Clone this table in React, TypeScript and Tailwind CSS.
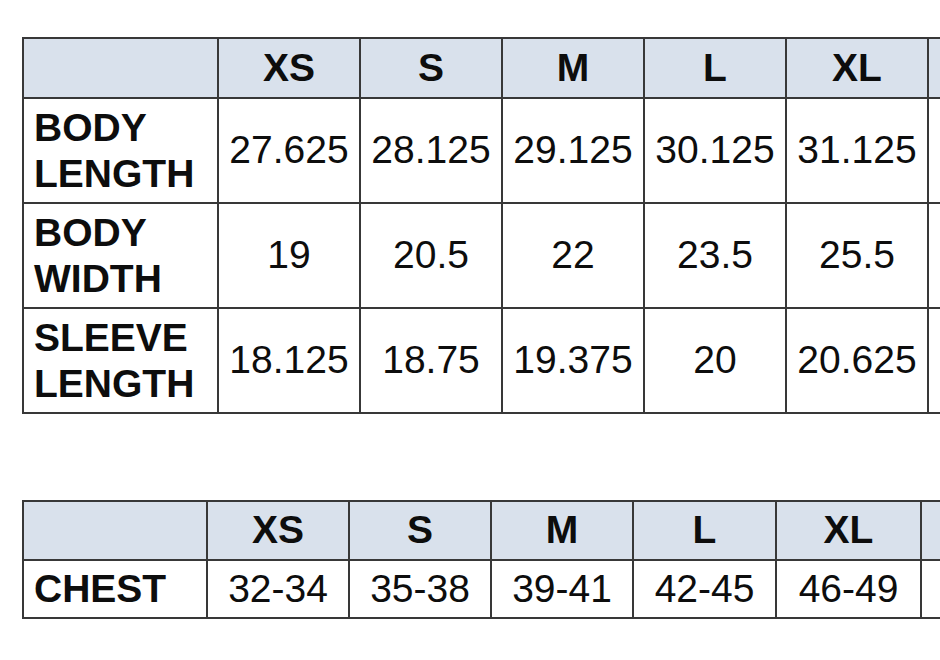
import type { ReactElement } from "react";

const SIZES = ["XS", "S", "M", "L", "XL", ""];

const BODY_ROWS: { label: [string, string]; values: string[] }[] = [
  { label: ["BODY", "LENGTH"], values: ["27.625", "28.125", "29.125", "30.125", "31.125", ""] },
  { label: ["BODY", "WIDTH"], values: ["19", "20.5", "22", "23.5", "25.5", ""] },
  { label: ["SLEEVE", "LENGTH"], values: ["18.125", "18.75", "19.375", "20", "20.625", ""] },
];

const CHEST = ["32-34", "35-38", "39-41", "42-45", "46-49", ""];

function HeaderCell({ text }: { text: string }): ReactElement {
  return (
    <div className="flex items-center justify-center bg-[#d9e1ec] font-bold">
      {text}
    </div>
  );
}

export default function App(): ReactElement {
  return (
    <div
      className="h-[660px] w-[940px] overflow-hidden bg-white pl-[22px] pt-[37px] text-[39px] text-[#0d0d0d]"
      style={{ fontFamily: '"Liberation Sans", Arial, sans-serif' }}
    >
      <div className="grid w-max grid-cols-[193px_140px_140px_140px_140px_140px_140px] grid-rows-[58px_103px_103px_103px] gap-[2px] bg-[#383838] p-[2px]">
        <div className="bg-[#d9e1ec]" />
        {SIZES.map((s, i) => (
          <HeaderCell key={i} text={s} />
        ))}
        {BODY_ROWS.map((row) => (
          <div key={row.label.join(" ")} className="contents">
            <div className="flex flex-col justify-center bg-white pl-[10px] font-bold leading-[46px]">
              <span>{row.label[0]}</span>
              <span>{row.label[1]}</span>
            </div>
            {row.values.map((v, i) => (
              <div key={i} className="flex items-center justify-center bg-white">
                {v}
              </div>
            ))}
          </div>
        ))}
      </div>

      <div className="mt-[86px] grid w-max grid-cols-[182px_140px_140px_140px_141px_143px_140px] grid-rows-[57px_56px] gap-[2px] bg-[#383838] p-[2px]">
        <div className="bg-[#d9e1ec]" />
        {SIZES.map((s, i) => (
          <HeaderCell key={i} text={s} />
        ))}
        <div className="flex items-center bg-white pl-[10px] font-bold">CHEST</div>
        {CHEST.map((v, i) => (
          <div key={i} className="flex items-center justify-center bg-white">
            {v}
          </div>
        ))}
      </div>
    </div>
  );
}
